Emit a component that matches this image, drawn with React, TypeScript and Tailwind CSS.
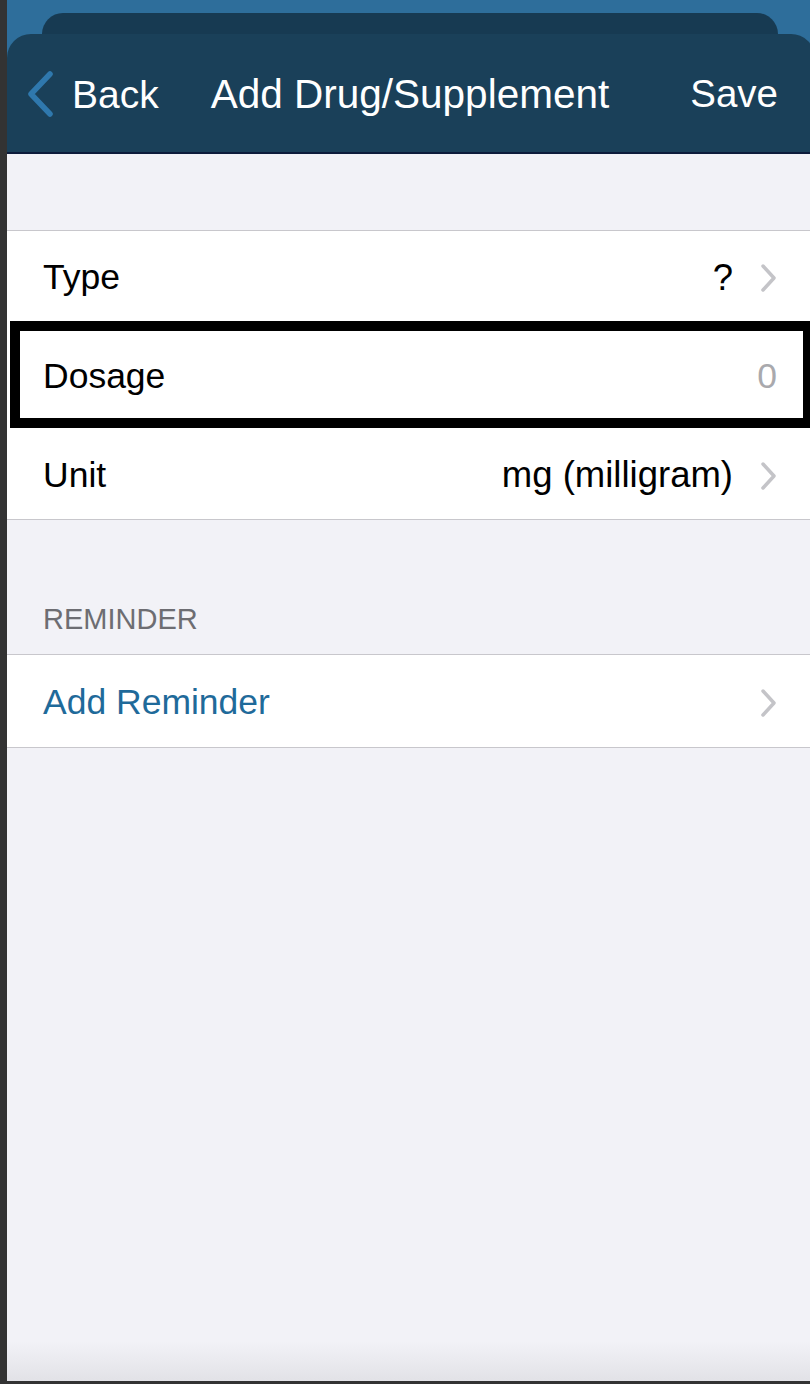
import { ReactNode } from 'react';

const font = { fontFamily: '"Liberation Sans", Arial, sans-serif' };

function Chevron() {
  return (
    <svg width="18" height="30" viewBox="0 0 18 30" className="shrink-0">
      <polyline
        points="4,3 15,15 4,27"
        fill="none"
        stroke="#c4c4c8"
        strokeWidth="3.5"
        strokeLinecap="round"
        strokeLinejoin="round"
      />
    </svg>
  );
}

interface RowProps {
  label: ReactNode;
  value?: ReactNode;
  chevron?: boolean;
  className?: string;
  labelClass?: string;
}

function Row({ label, value, chevron = true, className = '', labelClass = 'text-black' }: RowProps) {
  return (
    <div className={`flex items-center bg-white pl-[36px] pr-[33px] pt-[4px] ${className}`}>
      <span className={`text-[35.5px] leading-none ${labelClass}`}>{label}</span>
      <span className="ml-auto text-[36.5px] leading-none text-black">{value}</span>
      {chevron && <span className="ml-[26px] flex items-center"><Chevron /></span>}
    </div>
  );
}

export default function App() {
  return (
    <div className="flex h-[1384px] w-[810px] overflow-hidden bg-[#333333]" style={font}>
      <div className="w-[7px] shrink-0" />
      <div className="flex min-w-0 flex-1 flex-col bg-[#2e6e9b]">
        {/* stacked card behind the sheet */}
        <div className="h-[34px] shrink-0 pt-[13px]">
          <div className="ml-[35px] mr-[32px] h-[21px] rounded-t-[22px] bg-[#173a52]" />
        </div>

        {/* nav bar */}
        <div className="mr-[-5px] flex h-[120px] shrink-0 items-center rounded-t-[24px] border-b-2 border-[#0d1c3b] bg-[#1a4059] pl-[20px] pr-[37px] pt-[2px] text-white">
          <svg width="27" height="46" viewBox="0 0 27 46" className="shrink-0">
            <polyline
              points="23,3 4,23 23,43"
              fill="none"
              stroke="#2f78ad"
              strokeWidth="5.5"
              strokeLinecap="round"
              strokeLinejoin="round"
            />
          </svg>
          <span className="ml-[18px] text-[39px] leading-none">Back</span>
          <span className="ml-[52px] text-[40.5px] leading-none">Add Drug/Supplement</span>
          <span className="ml-auto text-[38.5px] leading-none">Save</span>
        </div>

        {/* content */}
        <div className="flex flex-1 flex-col bg-[#f2f2f7]">
          <div className="h-[76px] shrink-0" />
          <div className="border-y border-[#c8c7cc] bg-white">
            <Row label="Type" value="?" className="h-[90px]" />
            <div className="ml-[3px] flex h-[107px] items-center border-[10px] border-r-[7px] border-black bg-white pl-[23px] pr-[26px] pt-[4px]">
              <span className="text-[35.5px] leading-none text-black">Dosage</span>
              <span className="ml-auto text-[35.5px] leading-none text-[#a9a9ad]">0</span>
            </div>
            <Row label="Unit" value="mg (milligram)" className="h-[91px]" />
          </div>

          <div className="flex h-[134px] shrink-0 items-end pb-[17px] pl-[36px]">
            <span className="text-[29px] leading-[35px] text-[#6d6d72]">REMINDER</span>
          </div>
          <div className="border-y border-[#c8c7cc] bg-white">
            <Row label="Add Reminder" className="h-[92px]" labelClass="text-[#1f6a9a]" />
          </div>

          <div className="mt-auto h-[40px] shrink-0 bg-gradient-to-b from-[#f2f2f7] to-[#e2e2e7]" />
          <div className="h-[3px] shrink-0 bg-[#333333]" />
        </div>
      </div>
    </div>
  );
}
